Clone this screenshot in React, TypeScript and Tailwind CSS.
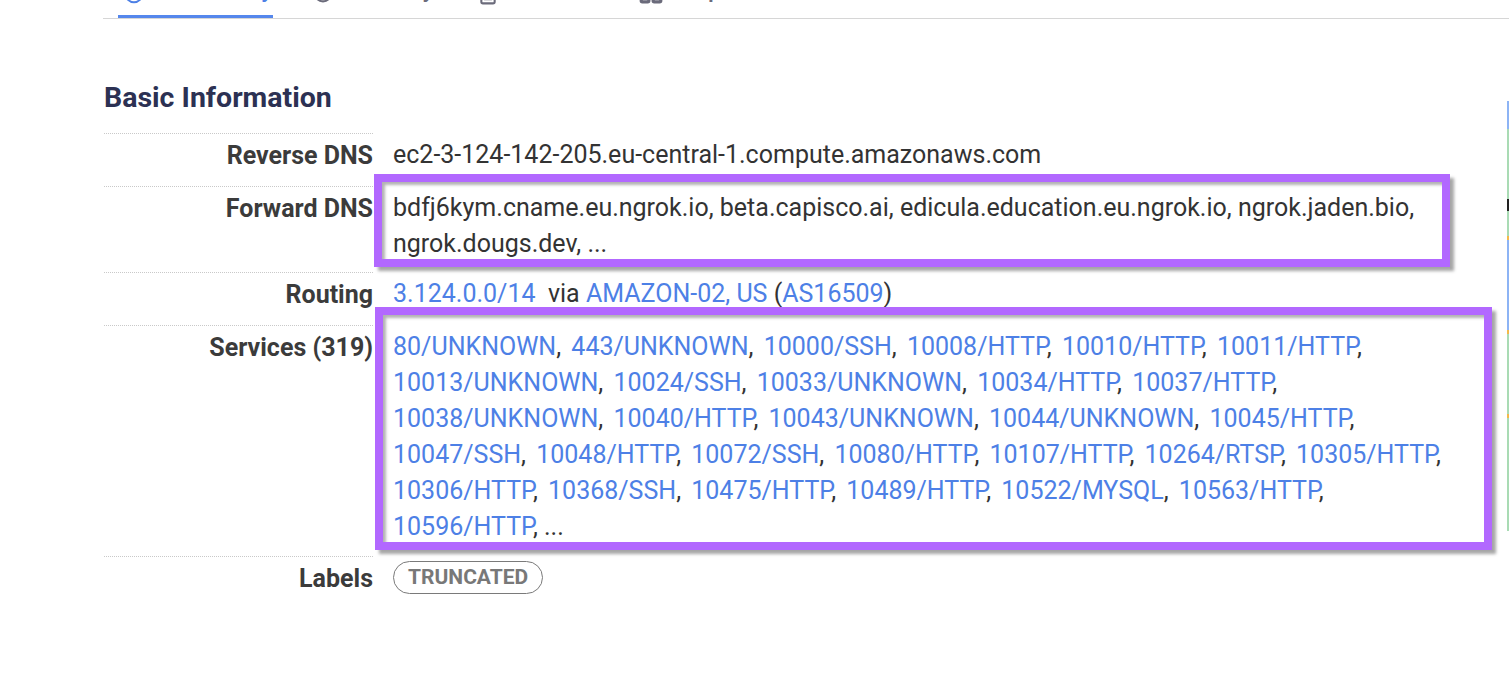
import React from 'react';
import { Clock, FileText, LayoutGrid, Info } from 'lucide-react';

const serviceLines: string[][] = [
  ['80/UNKNOWN', '443/UNKNOWN', '10000/SSH', '10008/HTTP', '10010/HTTP', '10011/HTTP'],
  ['10013/UNKNOWN', '10024/SSH', '10033/UNKNOWN', '10034/HTTP', '10037/HTTP'],
  ['10038/UNKNOWN', '10040/HTTP', '10043/UNKNOWN', '10044/UNKNOWN', '10045/HTTP'],
  ['10047/SSH', '10048/HTTP', '10072/SSH', '10080/HTTP', '10107/HTTP', '10264/RTSP', '10305/HTTP'],
  ['10306/HTTP', '10368/SSH', '10475/HTTP', '10489/HTTP', '10522/MYSQL', '10563/HTTP'],
];

const Link = ({ children, className = '' }: { children: React.ReactNode; className?: string }) => (
  <a href="#" className={`text-[#4d80e6] ${className}`}>
    {children}
  </a>
);

const Label = ({ children }: { children: React.ReactNode }) => (
  <div className="border-t border-dotted border-[#c9c9c9] pt-1 text-right font-bold text-[#3b3b3b]">
    {children}
  </div>
);

// purple annotation frame drawn over the screenshot
const Frame = ({ className }: { className: string }) => (
  <div
    className={`pointer-events-none absolute border-[8px] border-[#b268ff] shadow-[4px_4px_3px_rgba(0,0,0,0.35),inset_3px_3px_3px_rgba(0,0,0,0.3)] ${className}`}
  />
);

export default function App() {
  return (
    <div className="relative h-[675px] w-[1509px] overflow-hidden bg-white font-[Roboto,sans-serif] text-[25px] leading-[36px] text-[#333]">
      {/* tab bar, scrolled mostly out of view */}
      <div className="ml-[103px] -mt-[29px] flex h-[48px] items-end border-b border-[#d6d6d6] text-[24px]">
        <div className="ml-[15px] flex h-[47px] w-[155px] items-center border-b-[3px] border-[#5587ec] pb-[8px] text-[#4d80e6]">
          <Info className="ml-[6px] mt-[10px] h-[22px] w-[22px]" strokeWidth={2.5} />
          <span className="ml-[26px] font-medium">Summary</span>
        </div>
        <div className="ml-[40px] flex h-[47px] items-center pb-[11px] text-[#6b6b7b]">
          <Clock className="mt-[8px] h-[20px] w-[20px]" strokeWidth={2.5} />
          <span className="ml-[24px] font-medium">History</span>
        </div>
        <div className="ml-[44px] flex h-[47px] items-center pb-[11px] text-[#6b6b7b]">
          <FileText className="mt-[12px] h-[20px] w-[20px]" strokeWidth={2.5} />
          <span className="ml-[24px] font-medium">WHOIS</span>
        </div>
        <div className="ml-[40px] flex h-[47px] items-center pb-[11px] text-[#6b6b7b]">
          <LayoutGrid className="mt-[6px] h-[26px] w-[26px]" strokeWidth={3} />
          <span className="ml-[18px] font-medium">Explore</span>
        </div>
      </div>

      <div className="flex">
        <div className="w-[1506px] pl-[104px]">
          <h2 className="mt-[61px] mb-[17px] text-[28.5px] font-bold leading-[36px] text-[#2c3153]">Basic Information</h2>

          <div className="grid grid-cols-[269px_1067px] gap-x-5">
            <Label>Reverse DNS</Label>
            <div className="pt-1 pb-[13px] whitespace-nowrap">ec2-3-124-142-205.eu-central-1.compute.amazonaws.com</div>

            <Label>Forward DNS</Label>
            <div className="relative pt-1 pb-[10px] whitespace-nowrap">
              <div>bdfj6kym.cname.eu.ngrok.io, beta.capisco.ai, edicula.education.eu.ngrok.io, ngrok.jaden.bio,</div>
              <div>ngrok.dougs.dev, ...</div>
              <Frame className="-top-[12px] bottom-[5px] -left-[19px] right-[10px]" />
            </div>

            <Label>Routing</Label>
            <div className="pt-1 pb-[13px] whitespace-pre">
              <Link>3.124.0.0/14</Link>
              {'  via '}
              <Link>AMAZON-02, US</Link>
              {' ('}
              <Link>AS16509</Link>
              {')'}
            </div>

            <Label>Services (319)</Label>
            <div className="relative pt-1 pb-[11px] whitespace-nowrap">
              {serviceLines.map((line, i) => (
                <div key={i}>
                  {line.map((s, j) => (
                    <React.Fragment key={s}>
                      <Link className={j > 0 ? 'ml-[4px]' : ''}>{s}</Link>
                      {j < line.length - 1 ? ', ' : ','}
                    </React.Fragment>
                  ))}
                </div>
              ))}
              <div>
                <Link>10596/HTTP</Link>, ...
              </div>
              <Frame className="-top-[18px] bottom-[6px] -left-[18px] -right-[32px]" />
            </div>

            <Label>Labels</Label>
            <div className="pt-[3px]">
              <div className="flex h-[36px] items-center">
                <span className="inline-flex h-[33px] items-center rounded-full border border-[#7a7a7a] px-[14px] text-[21px] font-bold leading-none text-[#787878]">
                  TRUNCATED
                </span>
              </div>
            </div>
          </div>
        </div>

        {/* edge of the neighbouring chart panel */}
        <div className="mt-[82px] ml-[1px] flex h-[430px] w-[2px] flex-col">
          <div className="h-[28px] bg-[#8db4f5]" />
          <div className="h-[70px] bg-[#a9dbb4]" />
          <div className="h-[12px] bg-[#222]" />
          <div className="h-[25px] bg-[#a9dbb4]" />
          <div className="h-[4px] bg-[#f5b94a]" />
          <div className="h-[90px] bg-[#8db4f5]" />
          <div className="h-[4px] bg-[#f5b94a]" />
          <div className="h-[80px] bg-[#a9dbb4]" />
          <div className="h-[4px] bg-[#f5b94a]" />
          <div className="h-[113px] bg-[#a9dbb4]" />
        </div>
      </div>
    </div>
  );
}
